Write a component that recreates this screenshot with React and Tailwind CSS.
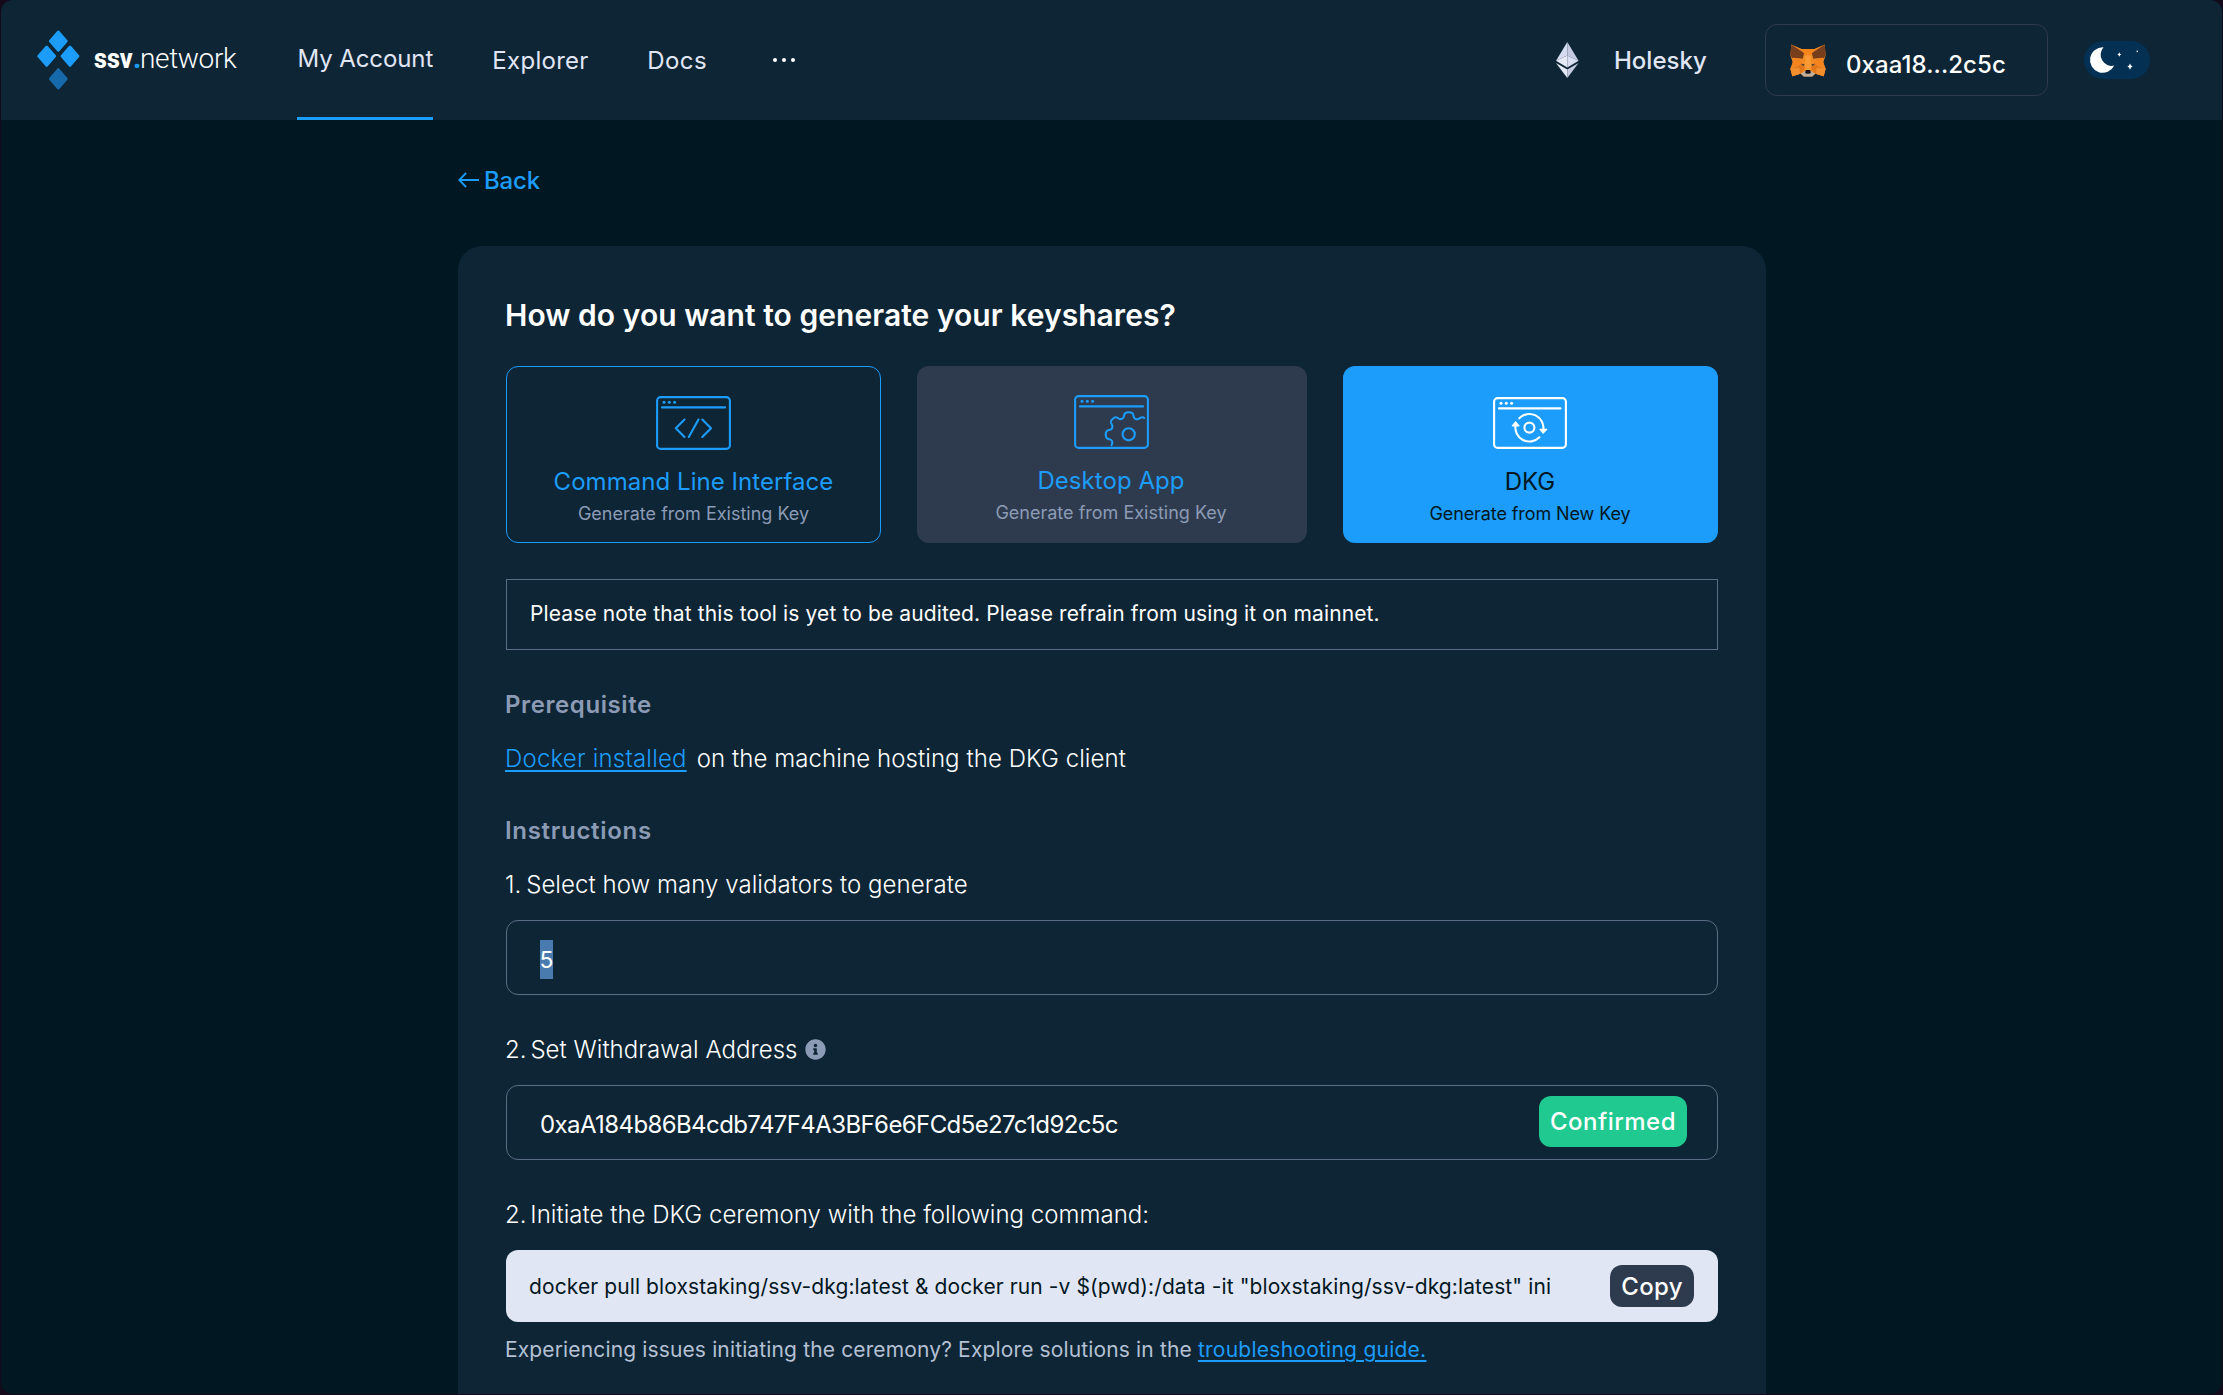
import React from "react";
import { FaInfoCircle } from "react-icons/fa";

function Diamond({ cx, cy, fill }) {
  const w = 8;
  const h = 9.2;
  return (
    <path
      d={`M${cx} ${cy - h}L${cx + w} ${cy}L${cx} ${cy + h}L${cx - w} ${cy}Z`}
      fill={fill}
      stroke={fill}
      strokeWidth="2.8"
      strokeLinejoin="round"
    />
  );
}

function Logo() {
  return (
    <div className="flex items-center">
      <svg width="43" height="60" viewBox="0 0 43 60" className="shrink-0">
        <Diamond cx={21.3} cy={11.1} fill="#1c9cfb" />
        <Diamond cx={9.7} cy={26.2} fill="#1c9cfb" />
        <Diamond cx={33} cy={26.2} fill="#1c9cfb" />
        <Diamond cx={21.3} cy={48.8} fill="#166aab" />
      </svg>
      <div className="ml-[14px] flex -translate-y-px items-center font-['Roboto',sans-serif] text-[28px] leading-8 text-white">
        <span className="w-[39px] origin-left scale-x-[0.9] font-extrabold">ssv</span>
        <span className="w-[7px] font-extrabold text-[#1c9cfb]">.</span>
        <span className="font-light tracking-[-0.36px]">network</span>
      </div>
    </div>
  );
}

function EthIcon() {
  return (
    <svg width="23" height="36" viewBox="0 0 23 36">
      <path d="M11.3 0L0 18.8L11.3 13.6Z" fill="#d5dbf0" />
      <path d="M11.3 0L22.6 18.8L11.3 13.6Z" fill="#c3cae2" />
      <path d="M0 18.8L11.3 13.6V25.4Z" fill="#e6eaf7" />
      <path d="M22.6 18.8L11.3 13.6V25.4Z" fill="#d9dff2" />
      <path d="M0 21L11.3 27.6V36Z" fill="#e6eaf7" />
      <path d="M22.6 21L11.3 27.6V36Z" fill="#c3cae2" />
    </svg>
  );
}

function FoxIcon() {
  return (
    <svg width="36" height="33" viewBox="0 0 107 97">
      <path d="M4 1L35 14H72L103 1L106 32L99 54L106 72L100 95L76 88L66 96H41L31 88L7 95L1 72L8 54L1 32Z" fill="#f08a24" />
      <path d="M4 1L42 26L38 43L11 40L7 42L1 32Z" fill="#763e1a" />
      <path d="M103 1L65 26L69 43L96 40L100 42L106 32Z" fill="#763e1a" />
      <path d="M35 14H72L62 34H45Z" fill="#f6851b" />
      <path d="M44 34H63L61 76H46Z" fill="#fb9a35" />
      <path d="M11 42L37 44L22 68L5 66Z" fill="#f5841f" />
      <path d="M96 42L70 44L85 68L102 66Z" fill="#f5841f" />
      <path d="M22 68L36 54L44 74L30 88L7 95L1 72Z" fill="#e2761b" />
      <path d="M85 68L71 54L63 74L77 88L100 95L106 72Z" fill="#e2761b" />
      <path d="M1 72L28 71L30 88L7 95Z" fill="#f28e2e" />
      <path d="M106 72L79 71L77 88L100 95Z" fill="#f28e2e" />
      <path d="M33 60L43 60L41 65Z" fill="#233447" />
      <path d="M74 60L64 60L66 65Z" fill="#233447" />
      <path d="M33 87L45 80H62L74 87L66 96H41Z" fill="#c0ad9e" />
      <path d="M47 77H60L62 85L58 88H49L45 85Z" fill="#161616" />
    </svg>
  );
}

function ThemeToggle() {
  return (
    <svg width="66" height="38" viewBox="0 0 66 38">
      <rect width="66" height="38" rx="19" fill="#043153" />
      <path d="M19.5 6.2A12.8 12.8 0 1 0 30.3 24.6A11.2 11.2 0 0 1 19.5 6.2Z" fill="#fff" />
      <path d="M35.3 11.3L36 12.800L37.200 13.500L36 14.200L35.300 15.700L34.600 14.200L33.400 13.500L34.600 12.800Z" fill="#fff" />
      <path d="M46 22.600L47 24.600L48.600 25.600L47 26.600L46 28.800L45 26.600L43.400 25.600L45 24.600Z" fill="#fff" />
      <circle cx="53.3" cy="10.4" r="0.8" fill="#fff" />
    </svg>
  );
}

function BrowserFrame({ width, height, lineEnd, children }) {
  return (
    <svg
      width={width}
      height={height}
      viewBox={`0 0 ${width} ${height}`}
      fill="none"
      stroke="currentColor"
      strokeWidth="2.1"
      strokeLinecap="round"
      strokeLinejoin="round"
    >
      <rect x="1.1" y="1.1" width={width - 2.2} height={height - 2.2} rx="3.5" />
      <path d={`M6 11.4H${lineEnd}`} />
      <g fill="currentColor" stroke="none">
        <circle cx="8" cy="6.2" r="1.5" />
        <circle cx="13.3" cy="6.2" r="1.5" />
        <circle cx="18.6" cy="6.2" r="1.5" />
      </g>
      {children}
    </svg>
  );
}

function CliIcon() {
  return (
    <BrowserFrame width={75} height={54} lineEnd={69}>
      <path d="M28.5 23.5L19.8 32.3L28.5 41" />
      <path d="M42.5 23.5L32.8 41" />
      <path d="M46.3 23.5L55 32.3L46.3 41" />
    </BrowserFrame>
  );
}

function DesktopIcon() {
  return (
    <BrowserFrame width={75} height={54} lineEnd={69}>
      <circle cx="54.7" cy="39.3" r="6.1" />
      <path d="M70.2 23C68.8 21.6 67.2 22.2 65.6 23.3C62.6 25.4 59.4 23.6 59.3 20.2C59.2 18 57.8 17.2 54.7 17.2C51.6 17.2 50.4 18 50.2 20.3C50 23.8 46.8 25.2 43.8 23C42 21.7 40.6 22 38.8 23.7C36.4 26 36.2 27 37.6 29C39.6 32 38.2 34.6 35 35C32.3 35.4 31.7 36.6 31.7 39.6C31.7 42.6 32.3 43.7 34.6 44C38.2 44.5 39.4 47.2 37.5 50.2" />
    </BrowserFrame>
  );
}

function DkgIcon() {
  return (
    <BrowserFrame width={74} height={52} lineEnd={67.5}>
      <circle cx="36.4" cy="30.6" r="5" />
      <path d="M26.3 21.3A14 14 0 0 1 50.3 33" />
      <path d="M46.4 40.3A14 14 0 0 1 22.6 28" />
      <path d="M47 32.4H53.7L50.2 36Z" fill="currentColor" strokeWidth="1.2" />
      <path d="M19.3 28.8H26L22.6 25Z" fill="currentColor" strokeWidth="1.2" />
    </BrowserFrame>
  );
}

function StepText({ className = "", children }) {
  return <p className={`h-8 whitespace-nowrap text-2xl leading-8 font-light text-white ${className}`}>{children}</p>;
}

function Header() {
  return (
    <header className="flex h-[120px] items-center bg-[#0e2535] pl-9 text-2xl text-[#e1e6f5]">
      <Logo />
      <nav className="ml-[61px] flex h-full items-center">
        <a className="flex h-full w-[136px] items-center justify-center border-b-[3px] border-[#1c9cfb] tracking-[-0.09px]">
          My Account
        </a>
        <a className="ml-[59px] w-[98px] pt-[2px] tracking-[0.28px]">Explorer</a>
        <a className="ml-[57px] w-[60px] pt-[2px] tracking-[0.4px]">Docs</a>
        <div className="ml-[66px] flex gap-[5px]">
          <span className="size-1 rounded-full bg-white" />
          <span className="size-1 rounded-full bg-white" />
          <span className="size-1 rounded-full bg-white" />
        </div>
      </nav>
      <div className="ml-auto flex items-center pr-[72px]">
        <EthIcon />
        <span className="ml-[35px] w-[94px] pt-[2px] font-medium">Holesky</span>
        <div className="ml-[57px] flex h-[72px] w-[283px] items-center rounded-xl border border-[#2e3b4e] pl-6">
          <FoxIcon />
          <span className="ml-5 pt-[10px] font-medium tracking-[0.08px] text-white">0xaa18...2c5c</span>
        </div>
        <div className="ml-9">
          <ThemeToggle />
        </div>
      </div>
    </header>
  );
}

export default function App() {
  return (
    <div className="h-[1395px] w-[2223px] overflow-hidden bg-[#140a1c] px-px pb-px font-['Inter',sans-serif]">
      <div className="flex h-full flex-col overflow-hidden rounded-xl bg-[#011722]">
        <Header />
        <main className="ml-[457px] flex w-[1308px] grow flex-col">
          <a className="mt-11 flex h-8 items-center text-2xl leading-8 font-medium tracking-[-0.2px] text-[#1c9cfb]">
            <svg width="22" height="16" viewBox="0 0 22 16" fill="none" stroke="currentColor" strokeWidth="1.9">
              <path d="M8.2 0.8L1.3 8L8.2 15.2M1.3 8H21" />
            </svg>
            <span className="ml-[4px] pt-[2px]">Back</span>
          </a>
          <section className="mt-[50px] flex grow flex-col rounded-t-3xl bg-[#0e2535] px-12 pt-[49px]">
            <h1 className="-ml-px h-10 text-[30px] leading-10 font-semibold tracking-[0.04px] text-white">
              How do you want to generate your keyshares?
            </h1>
            <div className="mt-[31px] flex h-[177px] justify-between text-center">
              <button className="flex w-[375px] flex-col items-center rounded-xl border border-[#1c9cfb] pt-[29px] text-[#1c9cfb]">
                <CliIcon />
                <span className="mt-4 text-2xl leading-8 tracking-[0.05px]">Command Line Interface</span>
                <span className="mt-[3px] text-lg leading-[26px] text-[#8c9bb5]">Generate from Existing Key</span>
              </button>
              <button className="flex w-[390px] flex-col items-center rounded-xl bg-[#2e3b4e] pt-[29px] pr-[2px] text-[#1c9cfb]">
                <DesktopIcon />
                <span className="mt-4 text-2xl leading-8 tracking-[0.05px]">Desktop App</span>
                <span className="mt-[3px] text-lg leading-[26px] text-[#8c9bb5]">Generate from Existing Key</span>
              </button>
              <button className="flex w-[375px] flex-col items-center rounded-xl bg-[#1c9cfb] pt-[31px] pr-px text-white">
                <DkgIcon />
                <span className="mt-[17px] text-2xl leading-8 text-[#011722]">DKG</span>
                <span className="mt-[3px] text-lg leading-[26px] tracking-[-0.1px] text-[#011722]">
                  Generate from New Key
                </span>
              </button>
            </div>
            <div className="mt-9 flex h-[71px] items-center border border-[#5b6c84] pb-px pl-[23px] text-[21px] tracking-[0.12px] whitespace-nowrap text-white">
              Please note that this tool is yet to be audited. Please refrain from using it on mainnet.
            </div>

            <h2 className="mt-[39px] -ml-px h-8 text-2xl leading-8 font-semibold tracking-[0.59px] text-[#8c9bb5]">
              Prerequisite
            </h2>
            <StepText className="mt-[22px] -ml-px">
              <a className="mr-[10px] tracking-[0.2px] text-[#1c9cfb] underline decoration-2 underline-offset-[3px]">
                Docker installed
              </a>
              <span className="tracking-[0.08px]">on the machine hosting the DKG client</span>
            </StepText>

            <h2 className="mt-10 -ml-px h-8 text-2xl leading-8 font-semibold tracking-[0.7px] text-[#8c9bb5]">
              Instructions
            </h2>
            <StepText className="mt-[22px] -ml-px tracking-[0.06px]">
              <span className="mr-[-2px]">1.</span> Select how many validators to generate
            </StepText>
            <div className="mt-[19px] flex h-[75px] items-center rounded-xl border border-[#5b6c84] pt-[4px] pl-[33px] text-2xl text-white">
              <span className="flex h-[39px] w-[13px] items-center justify-center bg-[#4a7bae] pt-px text-[23px]">5</span>
            </div>

            <StepText className="mt-[39px] -ml-px flex items-center tracking-[0.04px]">
              <span>
                <span className="mr-[-3px]">2.</span> Set Withdrawal Address
              </span>
              <FaInfoCircle className="-mt-[2px] ml-[7px] size-[21px] text-[#8c9bb5]" />
            </StepText>
            <div className="mt-[19px] flex h-[75px] items-center justify-between rounded-xl border border-[#5b6c84] pr-[30px] pl-[33px] text-2xl text-white">
              <span className="pt-[4px] tracking-[-0.6px]">0xaA184b86B4cdb747F4A3BF6e6FCd5e27c1d92c5c</span>
              <span className="-mt-[2px] flex h-[51px] w-[148px] items-center justify-center rounded-xl bg-[#20c98f] font-medium tracking-[0.5px]">
                Confirmed
              </span>
            </div>

            <StepText className="mt-[39px] -ml-px tracking-[0.03px]">
              <span className="mr-[-3px]">2.</span> Initiate the DKG ceremony with the following command:
            </StepText>
            <div className="mt-[19px] flex h-[72px] items-center justify-between rounded-xl bg-[#e1e6f5] pr-6 pl-[23px]">
              <div className="w-[1021px] overflow-hidden pt-[2px] text-[21px] leading-8 tracking-[0.1px] whitespace-nowrap text-[#011722]">
                docker pull bloxstaking/ssv-dkg:latest &amp; docker run -v $(pwd):/data -it "bloxstaking/ssv-dkg:latest" init
              </div>
              <button className="flex h-[42px] w-[84px] items-center justify-center rounded-xl bg-[#2e3b4e] pt-px text-2xl font-medium tracking-[0.3px] text-white">
                Copy
              </button>
            </div>
            <p className="mt-[12px] -ml-px h-8 text-[21px] leading-8 tracking-[0.14px] whitespace-nowrap text-[#b4c0d4]">
              Experiencing issues initiating the ceremony? Explore solutions in the{" "}
              <a className="tracking-[0.25px] text-[#1c9cfb] underline decoration-2 underline-offset-[3px]">
                troubleshooting guide.
              </a>
            </p>
          </section>
        </main>
      </div>
    </div>
  );
}
